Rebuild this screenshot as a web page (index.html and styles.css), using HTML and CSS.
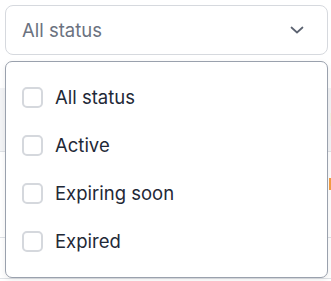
FILE: index.html
```html
<!DOCTYPE html>
<html>
<head>
<meta charset="utf-8">
<link rel="stylesheet" href="styles.css">
</head>
<body>
<div class="page">
  <div class="select">
    <span class="select-value">All status</span>
    <svg class="chev" width="16" height="16" viewBox="0 0 16 16"><path d="M2.5 5.5 L8 10.5 L13.5 5.5" fill="none" stroke="#5b6270" stroke-width="1.7" stroke-linecap="round" stroke-linejoin="round"/></svg>
  </div>
  <div class="table">
    <div class="thead"><span class="th-text">Expir</span></div>
    <div class="trow"><span class="badge"></span></div>
    <div class="trow last"></div>
  </div>
  <div class="menu">
    <label class="opt"><span class="box"></span><span>All status</span></label>
    <label class="opt"><span class="box"></span><span>Active</span></label>
    <label class="opt"><span class="box"></span><span>Expiring soon</span></label>
    <label class="opt"><span class="box"></span><span>Expired</span></label>
  </div>
</div>
</body>
</html>
```
FILE: styles.css
```css
html, body { margin: 0; padding: 0; background: #fff; height: 281px; overflow: hidden; }
body { font-family: Inter, "Noto Sans", sans-serif; width: 331px; }
.page { position: relative; padding: 5px 3px 0 5px; height: 276px; overflow: hidden; }
.select {
  border: 1px solid #d6d9de; border-radius: 8px;
  display: flex; align-items: center; justify-content: space-between;
  padding: 0 22px 0 16px; box-sizing: border-box; height: 50px; width: 323px;
}
.select-value { font-size: 18.5px; color: #6b7280; }
.chev { display: block; }
.table { margin: 33px -3px 0 -5px; }
.thead { height: 63px; background: #f3f4f6; border-bottom: 1px solid #dfe2e6; display: flex; align-items: center; justify-content: flex-end; overflow: hidden; }
.th-text { font-size: 17px; font-weight: 500; color: #1f2a44; margin-right: -40px; }
.trow { height: 85px; border-bottom: 1px solid #dfe2e6; display: flex; justify-content: flex-end; align-items: flex-start; }
.trow.last { height: 40px; }
.badge { width: 2px; height: 12px; background: #f59e42; margin-top: 26px; }
.menu {
  position: absolute; left: 5px; top: 61px; width: 323px; height: 217px; box-sizing: border-box;
  background: #fff; border: 1px solid #9aa1ad; border-radius: 7px;
  box-shadow: 0 2px 6px rgba(0,0,0,0.08);
  padding: 11px 0 0 16px; display: flex; flex-direction: column;
}
.opt { height: 48px; display: flex; align-items: center; gap: 12px; font-size: 18.5px; color: #1f2937; }
.box { width: 21px; height: 21px; box-sizing: border-box; border: 2px solid #d5d8dd; border-radius: 5px; background: #fff; }
```
